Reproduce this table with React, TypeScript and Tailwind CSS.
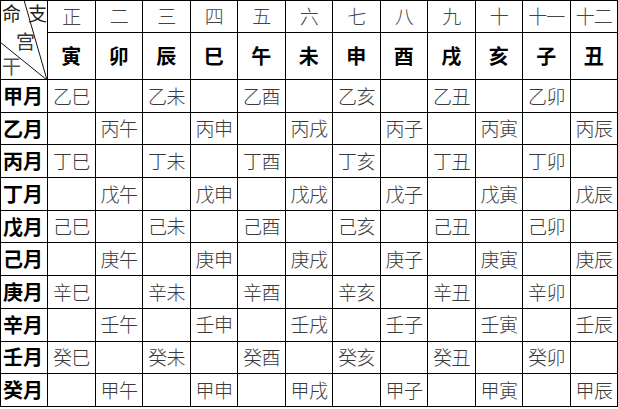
const months = ["正", "二", "三", "四", "五", "六", "七", "八", "九", "十", "十一", "十二"];
const branches = ["寅", "卯", "辰", "巳", "午", "未", "申", "酉", "戌", "亥", "子", "丑"];
const stems = ["甲", "乙", "丙", "丁", "戊", "己", "庚", "辛", "壬", "癸"];

// 月干 -> 命宫干 (next stem); branch runs three places ahead of the month
const rows = stems.map((s, i) => {
  const next = stems[(i + 1) % 10];
  const odd = i % 2 === 0;
  return {
    label: s + "月",
    cells: branches.map((_, j) => (odd === (j % 2 === 0) ? next + branches[(j + 3) % 12] : "")),
  };
});

const font = "font-['Noto_Sans_CJK_SC','Noto_Sans_CJK_JP',sans-serif]";

function Corner() {
  return (
    <div className="relative border-r border-b border-black">
      <svg className="absolute inset-0" width="46" height="79" viewBox="0 0 46 79">
        <line x1="23" y1="-1" x2="46" y2="79" stroke="#111" strokeWidth="1" />
        <line x1="-1" y1="41" x2="46" y2="79" stroke="#111" strokeWidth="1" />
      </svg>
      <span className="absolute left-[1px] top-[2px] text-[19px] leading-[19px] text-[#222]">命</span>
      <span className="absolute left-[27px] top-[2px] text-[19px] leading-[19px] text-[#222]">支</span>
      <span className="absolute left-[15px] top-[30px] text-[19px] leading-[19px] text-[#333]">宫</span>
      <span className="absolute left-[1px] top-[55px] text-[19px] leading-[19px] text-[#555]">干</span>
    </div>
  );
}

export default function App() {
  return (
    <div className={`w-[618px] h-[409px] bg-white ${font}`}>
      <div className="grid grid-cols-[47px_repeat(12,1fr)] grid-rows-[32px_47px_repeat(10,32.7px)] w-[618px] border-l border-t border-black">
        <div className="row-span-2 grid">
          <Corner />
        </div>
        {months.map((m) => (
          <div
            key={m}
            className="flex items-center justify-center border-r border-b border-black text-[19px] font-light text-[#444] tracking-[-1px]"
          >
            {m}
          </div>
        ))}
        {branches.map((b) => (
          <div
            key={b}
            className="flex items-center justify-center border-r border-b border-black text-[20px] font-bold text-black"
          >
            {b}
          </div>
        ))}
        {rows.map((r) => (
          <div key={r.label} className="contents">
            <div className="flex items-center pl-[2px] border-r border-b border-black text-[20px] font-bold text-black">
              {r.label}
            </div>
            {r.cells.map((c, j) => (
              <div
                key={j}
                className="flex items-center pl-[5px] border-r border-b border-black text-[19px] font-light text-[#3a3a3a] tracking-[-0.5px]"
              >
                {c}
              </div>
            ))}
          </div>
        ))}
      </div>
    </div>
  );
}
